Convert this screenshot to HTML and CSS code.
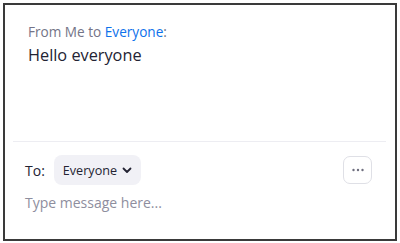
FILE: index.html
```html
<!DOCTYPE html>
<html lang="en">
<head>
<meta charset="utf-8">
<link rel="stylesheet" href="styles.css">
</head>
<body>
<div class="frame">
  <div class="messages">
    <div class="meta">From Me to <span class="to-name">Everyone</span>:</div>
    <div class="msg">Hello everyone</div>
  </div>
  <div class="divider"></div>
  <div class="composer">
    <div class="to-row">
      <span class="to-label">To:</span>
      <button class="pill">Everyone
        <svg class="chev" width="10" height="7" viewBox="0 0 10 7"><path d="M1.5 1.5 L5 5 L8.5 1.5" fill="none" stroke="#232333" stroke-width="1.8" stroke-linecap="round" stroke-linejoin="round"/></svg>
      </button>
      <span class="spacer"></span>
      <button class="more">
        <svg width="12" height="4" viewBox="0 0 12 4"><circle cx="1.5" cy="2" r="1.2" fill="#6e6e7e"/><circle cx="6" cy="2" r="1.2" fill="#6e6e7e"/><circle cx="10.5" cy="2" r="1.2" fill="#6e6e7e"/></svg>
      </button>
    </div>
    <div class="placeholder">Type message here...</div>
  </div>
</div>
</body>
</html>
```
FILE: styles.css
```css
html, body {
  margin: 0;
  padding: 0;
  background: #ffffff;
}
body {
  font-family: "Open Sans", "Noto Sans", sans-serif;
}
.frame {
  box-sizing: border-box;
  width: 394px;
  height: 238px;
  margin: 3px;
  border: 2px solid #3a3a3a;
  display: flex;
  flex-direction: column;
  background: #fff;
}
.messages {
  height: 136px;
  box-sizing: border-box;
  padding: 18px 20px 0 23px;
}
.meta {
  font-size: 13.6px;
  line-height: 18px;
  color: #747487;
}
.to-name {
  color: #0e71eb;
}
.msg {
  font-size: 16.3px;
  line-height: 22px;
  color: #232333;
  margin-top: 3px;
}
.divider {
  height: 1px;
  background: #ededf2;
  margin: 0 9px 0 8px;
}
.composer {
  flex: 1;
  padding: 13px 23px 0 20px;
}
.to-row {
  display: flex;
  align-items: center;
  height: 30px;
}
.to-label {
  font-size: 14px;
  color: #232333;
  margin-right: 9px;
}
.pill {
  font-family: inherit;
  display: flex;
  align-items: center;
  gap: 5px;
  height: 30px;
  padding: 0 9px 0 9px;
  border: none;
  border-radius: 8px;
  background: #f1f1f6;
  font-size: 12.6px;
  color: #232333;
}
.spacer {
  flex: 1;
}
.more {
  width: 29px;
  height: 28px;
  box-sizing: border-box;
  border: 1px solid #dfe0e6;
  border-radius: 7px;
  background: #fff;
  display: flex;
  align-items: center;
  justify-content: center;
  padding: 0;
}
.placeholder {
  margin-top: 8px;
  font-size: 14px;
  line-height: 20px;
  color: #8e8e9e;
}
```
